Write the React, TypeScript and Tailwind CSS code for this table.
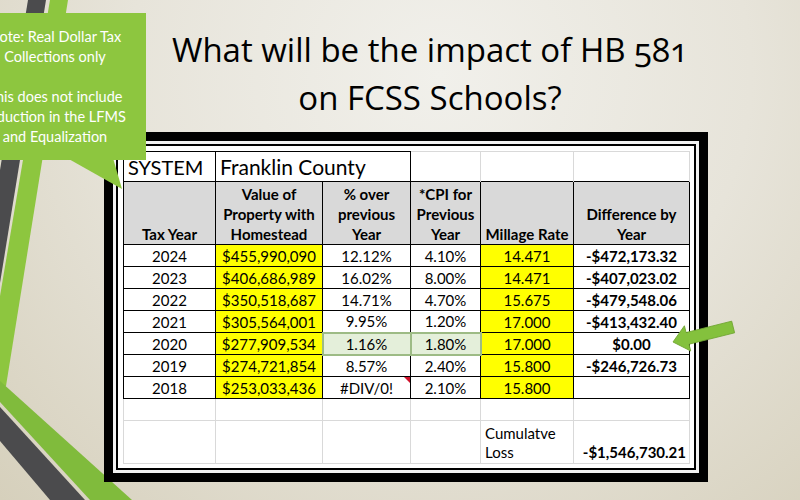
import React from 'react';

type Row = [string, string, string, string, string, string];

const rows: Row[] = [
  ['2024', '$455,990,090', '12.12%', '4.10%', '14.471', '-$472,173.32'],
  ['2023', '$406,686,989', '16.02%', '8.00%', '14.471', '-$407,023.02'],
  ['2022', '$350,518,687', '14.71%', '4.70%', '15.675', '-$479,548.06'],
  ['2021', '$305,564,001', '9.95%', '1.20%', '17.000', '-$413,432.40'],
  ['2020', '$277,909,534', '1.16%', '1.80%', '17.000', '$0.00'],
  ['2019', '$274,721,854', '8.57%', '2.40%', '15.800', '-$246,726.73'],
  ['2018', '$253,033,436', '#DIV/0!', '2.10%', '15.800', ''],
];

function Decoration() {
  return (
    <svg className="absolute left-0 top-0" width="800" height="500" viewBox="0 0 800 500">
      {/* dark road stripe */}
      <polygon points="28,0 46,0 0,283 0,170" fill="#4b4b4d" />
      {/* light green stripe */}
      <polygon points="50,0 68,0 6,386 0,386 0,296" fill="#8dc63f" />
      {/* lower bands */}
      <polygon points="0,381 132,500 90,500 0,402" fill="#80bb3c" />
      <polygon points="0,407 85,500 50,500 0,441" fill="#4b4b4d" />
    </svg>
  );
}

function Callout() {
  return (
    <div className="absolute left-[-36px] top-[13px]">
      <div className="w-[182px] h-[147px] bg-[#8dc63f] pt-[14px] text-center text-[14.5px] leading-[20px] text-white font-['Lato',sans-serif]">
        <p>Note: Real Dollar Tax</p>
        <p>Collections only</p>
        <p>&nbsp;</p>
        <p>This does not include</p>
        <p>reduction in the LFMS</p>
        <p>and Equalization</p>
      </div>
      <svg className="absolute left-[100px] top-[145px]" width="62" height="32" viewBox="0 0 62 32">
        <polygon points="3,0 49,0 58,31" fill="#8dc63f" />
      </svg>
    </div>
  );
}

function Arrow() {
  return (
    <svg className="absolute left-0 top-0 pointer-events-none" width="800" height="500" viewBox="0 0 800 500">
      <polygon
        points="673,342 688,329 688,336 735,336 735,348 688,348 688,355"
        fill="#84c13d"
        stroke="#6fa431"
        strokeWidth="0.8"
        transform="rotate(-14 673 342)"
      />
    </svg>
  );
}

const blk = 'border border-black';
const grid = 'border border-[#d9d9d9]';

function DataTable() {
  return (
    <table className="table-fixed border-collapse w-[566px] text-[15px] leading-[20px] text-black font-['Lato',sans-serif]">
      <colgroup>
        <col className="w-[92px]" />
        <col className="w-[107px]" />
        <col className="w-[88px]" />
        <col className="w-[70px]" />
        <col className="w-[93px]" />
        <col className="w-[116px]" />
      </colgroup>
      <tbody>
        <tr className="h-[30px]">
          <td className={`${blk} px-[4px] text-[20px] leading-[26px]`}>SYSTEM</td>
          <td colSpan={2} className={`${blk} px-[4px] text-[21px] leading-[26px]`}>
            Franklin County
          </td>
          <td className="border-r border-t border-[#d9d9d9]" />
          <td className="border-r border-t border-[#d9d9d9]" />
          <td className="border-r border-t border-[#d9d9d9]" />
        </tr>
        <tr className="h-[63px] bg-[#d9d9d9] font-bold">
          <td className={`${blk} align-bottom text-center`}>Tax Year</td>
          <td className={`${blk} align-bottom text-center`}>
            Value of
            <br />
            Property with
            <br />
            Homestead
          </td>
          <td className={`${blk} align-bottom text-center`}>
            % over
            <br />
            previous
            <br />
            Year
          </td>
          <td className={`${blk} align-bottom text-center`}>
            *CPI for
            <br />
            Previous
            <br />
            Year
          </td>
          <td className={`${blk} align-bottom text-center`}>Millage Rate</td>
          <td className={`${blk} align-bottom text-center`}>
            Difference by
            <br />
            Year
          </td>
        </tr>
        {rows.map((r) => {
          const hl = r[0] === '2020';
          const pct = hl ? 'border-2 border-[#9dbb85] bg-[#e4efda]' : blk;
          return (
            <tr key={r[0]} className="h-[22px]">
              <td className={`${blk} text-center`}>{r[0]}</td>
              <td className={`${blk} text-center bg-[#ffff00]`}>{r[1]}</td>
              <td className={`${pct} text-center relative`}>
                {r[2]}
                {r[2] === '#DIV/0!' ? (
                  <span className="absolute right-0 top-0 w-0 h-0 border-t-[6px] border-l-[6px] border-t-[#d0102a] border-l-transparent" />
                ) : null}
              </td>
              <td className={`${pct} text-center`}>{r[3]}</td>
              <td className={`${blk} text-center bg-[#ffff00]`}>{r[4]}</td>
              <td className={`${blk} text-center font-bold`}>{r[5]}</td>
            </tr>
          );
        })}
        <tr className="h-[22px]">
          <td className="border-x border-[#d9d9d9]" />
          <td className="border-x border-[#d9d9d9]" />
          <td className="border-x border-[#d9d9d9]" />
          <td className="border-x border-[#d9d9d9]" />
          <td className="border-x border-[#d9d9d9]" />
          <td className="border-x border-[#d9d9d9]" />
        </tr>
        <tr className="h-[43px]">
          <td className={grid} />
          <td className={grid} />
          <td className={grid} />
          <td className={grid} />
          <td className={`${grid} align-bottom px-[4px] pb-[1px] leading-[19px]`}>
            Cumulatve
            <br />
            Loss
          </td>
          <td className={`${grid} align-bottom text-right pr-[3px] pb-[1px] font-bold`}>-$1,546,730.21</td>
        </tr>
      </tbody>
    </table>
  );
}

export default function App() {
  return (
    <div className="relative w-[800px] h-[500px] overflow-hidden bg-[radial-gradient(ellipse_at_55%_15%,#f1f0eb_0%,#e7e4da_50%,#d6d0bc_100%)]">
      <Decoration />
      <div className="relative flex flex-col">
        <h1 className="mt-[26px] ml-[150px] w-[560px] text-center text-[33px] leading-[48px] text-black oldstyle-nums font-['Open_Sans',sans-serif]">
          What will be the impact of HB 581
          <br />
          on FCSS Schools?
        </h1>
        <div className="mt-[10px] ml-[104px] w-[604px] h-[350px] bg-black p-[9px]">
          <div className="h-full bg-[#f2f2f2] p-[3px]">
            <div className="h-full border-2 border-black bg-white p-[5px]">
              <DataTable />
            </div>
          </div>
        </div>
      </div>
      <Callout />
      <Arrow />
    </div>
  );
}
